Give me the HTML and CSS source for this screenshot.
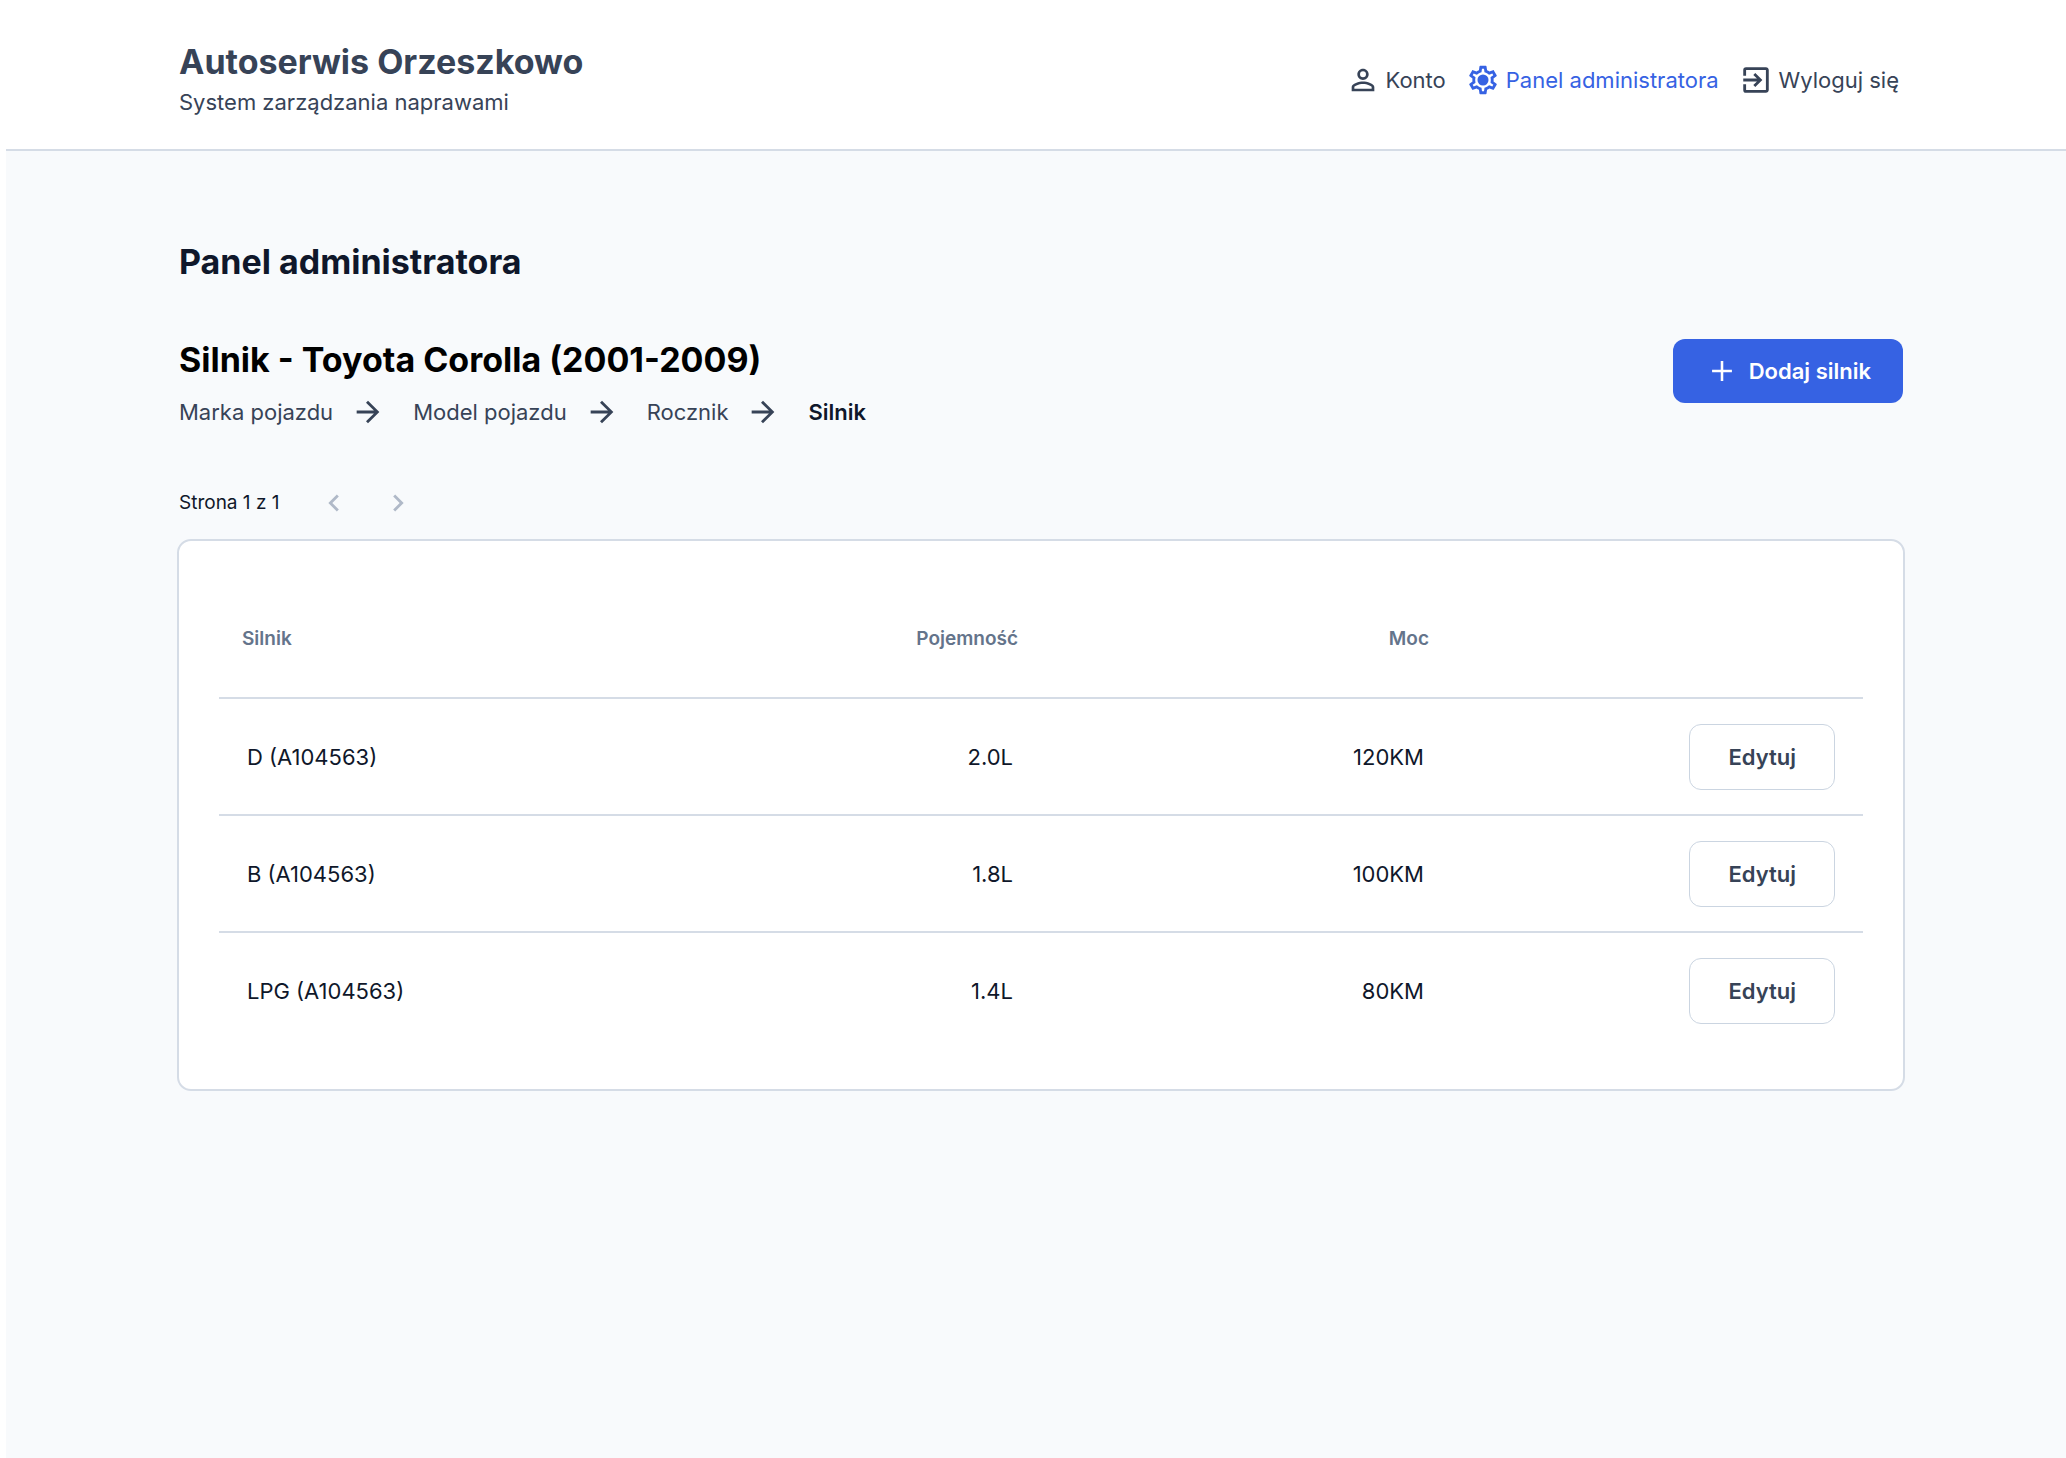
FILE: index.html
```html
<!DOCTYPE html>
<html lang="pl">
<head>
    <meta charset="UTF-8">
    <meta name="viewport" content="width=device-width, initial-scale=1.0">
    <title>Autoserwis Orzeszkowo - Panel administratora</title>
    <link rel="stylesheet" href="styles.css">
</head>
<body>
    <header class="header">
        <div class="brand">
            <p class="brand-name">Autoserwis Orzeszkowo</p>
            <p class="brand-subtitle">System zarządzania naprawami</p>
        </div>
        <nav class="nav">
            <a class="nav-link" href="#">
                <svg class="icon" viewBox="0 0 24 24" aria-hidden="true"><path d="M12 5.9a2.1 2.1 0 1 1 0 4.2 2.1 2.1 0 0 1 0-4.2m0 9c2.97 0 6.1 1.46 6.1 2.1v1.1H5.9V17c0-.64 3.13-2.1 6.1-2.1M12 4C9.79 4 8 5.79 8 8s1.79 4 4 4 4-1.79 4-4-1.79-4-4-4zm0 9c-2.67 0-8 1.34-8 4v3h16v-3c0-2.66-5.33-4-8-4z"/></svg>
                Konto
            </a>
            <a class="nav-link active" href="#">
                <svg class="icon" viewBox="0 0 24 24" aria-hidden="true"><path d="M19.43 12.98c.04-.32.07-.64.07-.98 0-.34-.03-.66-.07-.98l2.11-1.65c.19-.15.24-.42.12-.64l-2-3.46c-.09-.16-.26-.25-.44-.25-.06 0-.12.01-.17.03l-2.49 1c-.52-.4-1.08-.73-1.69-.98l-.38-2.65C14.46 2.18 14.25 2 14 2h-4c-.25 0-.46.18-.49.42l-.38 2.65c-.61.25-1.17.59-1.69.98l-2.49-1c-.06-.02-.12-.03-.18-.03-.17 0-.34.09-.43.25l-2 3.46c-.13.22-.07.49.12.64l2.11 1.65c-.04.32-.07.65-.07.98 0 .33.03.66.07.98l-2.11 1.65c-.19.15-.24.42-.12.64l2 3.46c.09.16.26.25.44.25.06 0 .12-.01.17-.03l2.49-1c.52.4 1.08.73 1.69.98l.38 2.65c.03.24.24.42.49.42h4c.25 0 .46-.18.49-.42l.38-2.65c.61-.25 1.17-.59 1.69-.98l2.49 1c.06.02.12.03.18.03.17 0 .34-.09.43-.25l2-3.46c.12-.22.07-.49-.12-.64l-2.11-1.65zm-1.98-1.71c.04.31.05.52.05.73 0 .21-.02.43-.05.73l-.14 1.13.89.7 1.08.84-.7 1.21-1.27-.51-1.04-.42-.9.68c-.43.32-.84.56-1.25.73l-1.06.43-.16 1.13-.2 1.35h-1.4l-.19-1.35-.16-1.13-1.06-.43c-.43-.18-.83-.41-1.23-.71l-.91-.7-1.06.43-1.27.51-.7-1.21 1.08-.84.89-.7-.14-1.13c-.03-.31-.05-.54-.05-.74s.02-.43.05-.73l.14-1.13-.89-.7-1.08-.84.7-1.21 1.27.51 1.04.42.9-.68c.43-.32.84-.56 1.25-.73l1.06-.43.16-1.13.2-1.35h1.39l.19 1.35.16 1.13 1.06.43c.43.18.83.41 1.23.71l.91.7 1.06-.43 1.27-.51.7 1.21-1.07.85-.89.7.14 1.13z"/><circle cx="12" cy="12" r="3.9"/></svg>
                Panel administratora
            </a>
            <a class="nav-link" href="#">
                <svg class="icon" viewBox="0 0 24 24" aria-hidden="true"><path d="M10.09 15.59 11.5 17l5-5-5-5-1.41 1.41L12.67 11H3v2h9.67l-2.58 2.59zM19 3H5a2 2 0 0 0-2 2v4h2V5h14v14H5v-4H3v4a2 2 0 0 0 2 2h14c1.1 0 2-.9 2-2V5c0-1.1-.9-2-2-2z"/></svg>
                Wyloguj się
            </a>
        </nav>
    </header>

    <main class="main">
        <h1 class="page-title">Panel administratora</h1>

        <div class="section-header">
            <div>
                <h2 class="section-title">Silnik - Toyota Corolla (2001-2009)</h2>
                <nav class="breadcrumbs" aria-label="Breadcrumbs">
                    <a href="#">Marka pojazdu</a>
                    <svg class="icon" viewBox="0 0 24 24" aria-hidden="true"><path d="m12 4-1.41 1.41L16.17 11H4v2h12.17l-5.58 5.59L12 20l8-8z"/></svg>
                    <a href="#">Model pojazdu</a>
                    <svg class="icon" viewBox="0 0 24 24" aria-hidden="true"><path d="m12 4-1.41 1.41L16.17 11H4v2h12.17l-5.58 5.59L12 20l8-8z"/></svg>
                    <a href="#">Rocznik</a>
                    <svg class="icon" viewBox="0 0 24 24" aria-hidden="true"><path d="m12 4-1.41 1.41L16.17 11H4v2h12.17l-5.58 5.59L12 20l8-8z"/></svg>
                    <span class="current">Silnik</span>
                </nav>
            </div>
            <button class="btn btn-primary" type="button">
                <svg class="icon" viewBox="0 0 24 24" aria-hidden="true"><path d="M19 12.9h-6.1V19h-1.8v-6.1H5v-1.8h6.1V5h1.8v6.1H19z"/></svg>
                Dodaj silnik
            </button>
        </div>

        <div class="pagination">
            <span>Strona 1 z 1</span>
            <div class="pagination-buttons">
                <button class="page-btn" type="button" aria-label="Poprzednia strona" disabled>
                    <svg class="icon" viewBox="0 0 24 24" aria-hidden="true"><path d="M15.41 7.41 14 6l-6 6 6 6 1.41-1.41L10.83 12z"/></svg>
                </button>
                <button class="page-btn" type="button" aria-label="Następna strona" disabled>
                    <svg class="icon" viewBox="0 0 24 24" aria-hidden="true"><path d="M10 6 8.59 7.41 13.17 12l-4.58 4.59L10 18l6-6z"/></svg>
                </button>
            </div>
        </div>

        <div class="card">
            <table class="table">
                <thead>
                    <tr>
                        <th>Silnik</th>
                        <th>Pojemność</th>
                        <th>Moc</th>
                        <th></th>
                    </tr>
                </thead>
                <tbody>
                    <tr>
                        <td>D (A104563)</td>
                        <td>2.0L</td>
                        <td>120KM</td>
                        <td><button class="btn btn-outline" type="button">Edytuj</button></td>
                    </tr>
                    <tr>
                        <td>B (A104563)</td>
                        <td>1.8L</td>
                        <td>100KM</td>
                        <td><button class="btn btn-outline" type="button">Edytuj</button></td>
                    </tr>
                    <tr>
                        <td>LPG (A104563)</td>
                        <td>1.4L</td>
                        <td>80KM</td>
                        <td><button class="btn btn-outline" type="button">Edytuj</button></td>
                    </tr>
                </tbody>
            </table>
        </div>
    </main>
</body>
</html>
```
FILE: styles.css
```css
* {
    box-sizing: border-box;
}
body {
    font-family: Inter, 'Liberation Sans', sans-serif;
    font-size: 22px;
    line-height: 34px;
    margin: 0 0 0 6px;
    background: #fff;
    color: #0f172a;
    min-height: 100vh;
    display: flex;
    flex-direction: column;
}
h1, h2, p {
    margin: 0;
}
a {
    color: inherit;
    text-decoration: none;
}
button {
    font: inherit;
    cursor: pointer;
}
.icon {
    width: 34px;
    height: 34px;
    fill: currentColor;
    flex-shrink: 0;
}

/* Header */
.header {
    display: flex;
    justify-content: space-between;
    align-items: center;
    padding: 41px 163px 30px 173px;
    border-bottom: 2px solid #d5dce6;
    color: #374357;
}
.brand-name {
    font-size: 34px;
    font-weight: 700;
    line-height: 42px;
    margin-bottom: 2px;
}
.nav {
    display: flex;
    gap: 20px;
    padding-right: 4px;
}
.nav-link {
    display: flex;
    align-items: center;
    gap: 6px;
}
.nav-link.active {
    color: #3662e3;
}

/* Content */
.main {
    flex: 1;
    padding: 90px 163px 40px 173px;
    background: #f8fafc;
}
.page-title, .section-title {
    font-size: 34px;
    font-weight: 700;
    line-height: 42px;
}
.page-title {
    margin-bottom: 56px;
}
.section-title {
    color: #000;
    margin-bottom: 14px;
}
.section-header {
    display: flex;
    justify-content: space-between;
    align-items: flex-start;
}
.breadcrumbs {
    display: flex;
    align-items: center;
    color: #374357;
}
.breadcrumbs .icon {
    margin: 0 28px 0 18px;
}
.breadcrumbs .current {
    color: #0f172a;
    font-weight: 600;
}

/* Buttons */
.btn {
    display: inline-flex;
    align-items: center;
    gap: 10px;
    height: 64px;
    padding: 0 32px;
    border: none;
    border-radius: 12px;
    font-weight: 600;
}
.btn-primary {
    background: #3662e3;
    color: #fff;
}
.btn-outline {
    height: 66px;
    padding: 0 38px;
    border: 1px solid #cbd5e1;
    background: #fff;
    color: #374357;
}

/* Pagination */
.pagination {
    display: flex;
    align-items: center;
    gap: 22px;
    margin: 42px 0 4px;
    font-size: 19px;
}
.pagination-buttons {
    display: flex;
}
.page-btn {
    display: flex;
    padding: 15px;
    border: none;
    background: none;
    color: #b0b9c8;
    cursor: default;
}

/* Table */
.card {
    margin: 0 -2px;
    padding: 40px;
    background: #fff;
    border: 2px solid #d5dce6;
    border-radius: 14px;
}
.table {
    width: 100%;
    table-layout: fixed;
    border-collapse: collapse;
}
th, td {
    height: 117px;
    padding: 0 28px;
    text-align: right;
}
th {
    padding: 0 23px;
    color: #64748b;
    font-size: 19px;
    font-weight: 600;
}
th:first-child, td:first-child {
    text-align: left;
}
tbody tr {
    border-top: 2px solid #d5dce6;
}
```
